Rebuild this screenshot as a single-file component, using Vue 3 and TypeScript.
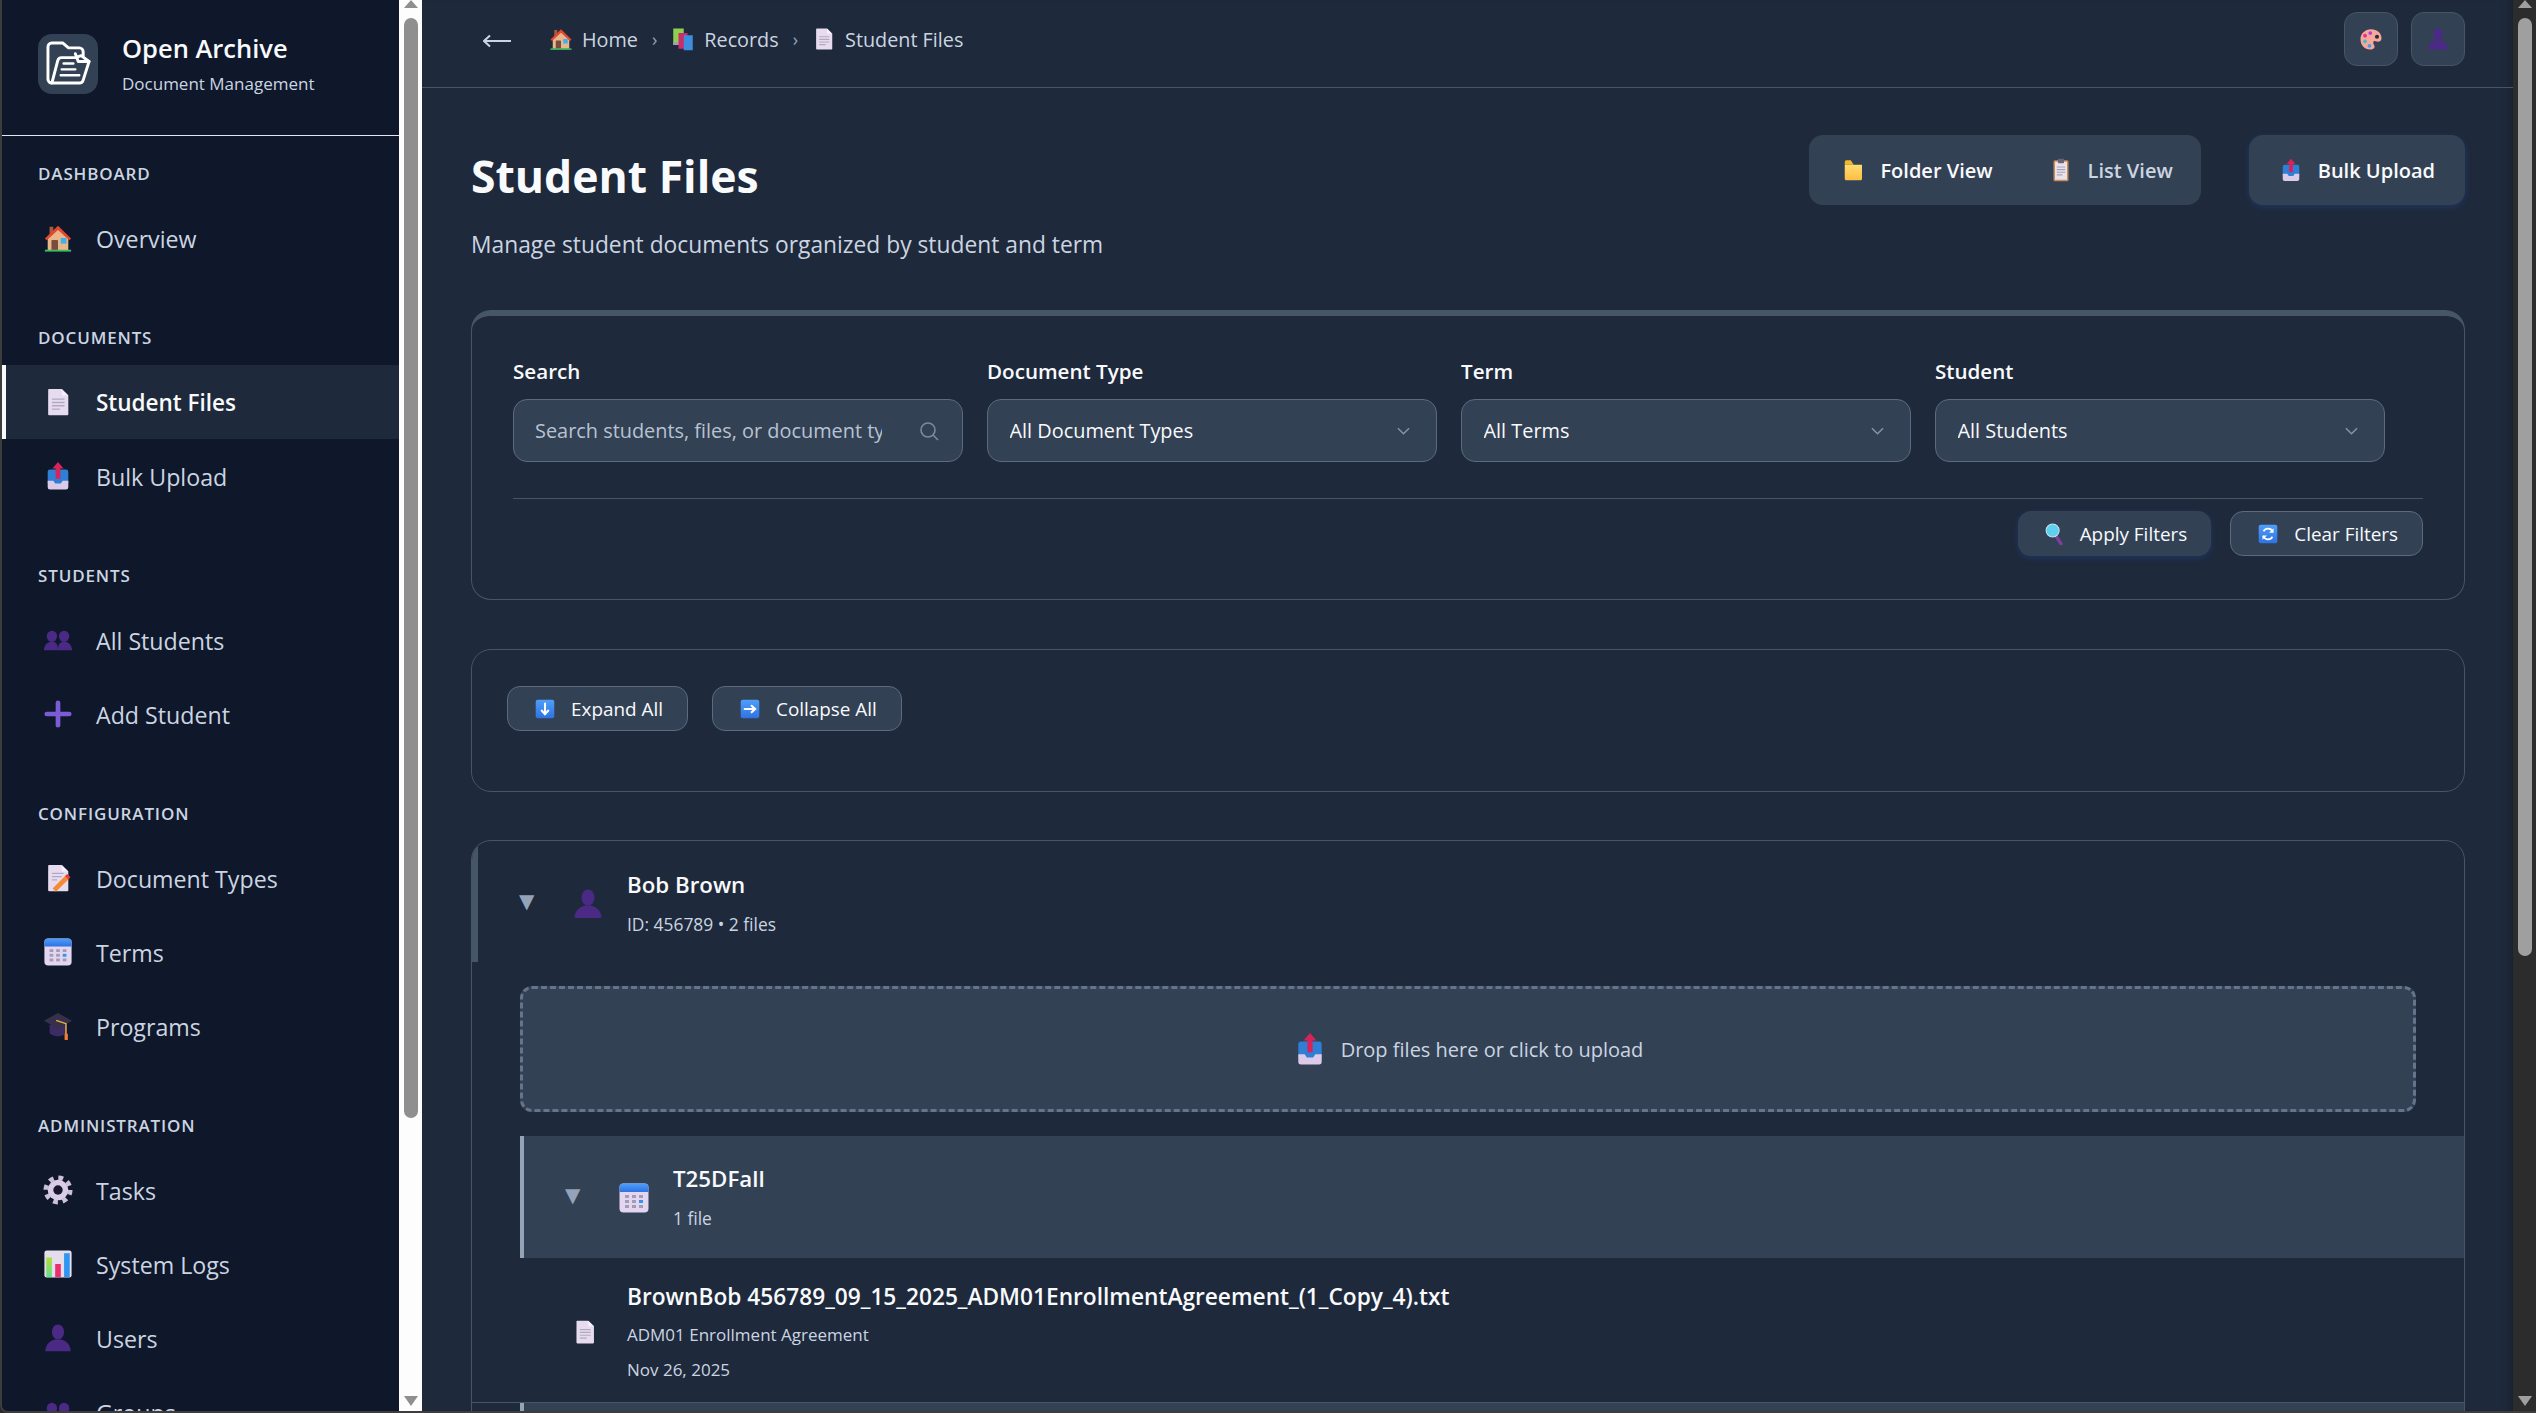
<script setup lang="ts">
interface NavItem {
  label: string;
  icon: string;
  active?: boolean;
}

interface NavSection {
  title: string;
  items: NavItem[];
}

const sections: NavSection[] = [
  { title: 'Dashboard', items: [{ label: 'Overview', icon: 'house' }] },
  {
    title: 'Documents',
    items: [
      { label: 'Student Files', icon: 'doc', active: true },
      { label: 'Bulk Upload', icon: 'upload' },
    ],
  },
  {
    title: 'Students',
    items: [
      { label: 'All Students', icon: 'people' },
      { label: 'Add Student', icon: 'plus' },
    ],
  },
  {
    title: 'Configuration',
    items: [
      { label: 'Document Types', icon: 'docpen' },
      { label: 'Terms', icon: 'calendar' },
      { label: 'Programs', icon: 'cap' },
    ],
  },
  {
    title: 'Administration',
    items: [
      { label: 'Tasks', icon: 'gear' },
      { label: 'System Logs', icon: 'chart' },
      { label: 'Users', icon: 'user' },
      { label: 'Groups', icon: 'people' },
    ],
  },
];

const selects = [
  { label: 'Document Type', value: 'All Document Types' },
  { label: 'Term', value: 'All Terms' },
  { label: 'Student', value: 'All Students' },
];
</script>

<template>
  <div class="app">
    <svg class="sprite" aria-hidden="true">
      <defs>
        <linearGradient id="g-blue" x1="0" y1="0" x2="0" y2="1">
          <stop offset="0" stop-color="#4f9ffa" />
          <stop offset="1" stop-color="#2f72e2" />
        </linearGradient>
        <linearGradient id="g-folder" x1="0" y1="0" x2="0" y2="1">
          <stop offset="0" stop-color="#ffdd6e" />
          <stop offset="1" stop-color="#ffbd45" />
        </linearGradient>
        <linearGradient id="g-green" x1="0" y1="0" x2="0" y2="1">
          <stop offset="0" stop-color="#b5dc3c" />
          <stop offset="1" stop-color="#5fe08f" />
        </linearGradient>
      </defs>
      <symbol id="i-house" viewBox="0 0 32 32">
        <rect x="7" y="4" width="4" height="10" fill="#a65b3c" />
        <path d="M16 6 L27 16 V29 H5 V16z" fill="#e9b78c" />
        <path d="M16 3 L2 16.5 l2 2 L16 7.5 L28 18.5 l2-2z" fill="#e2492f" />
        <rect x="9" y="18" width="7" height="11" rx="1" fill="#7b4b3c" />
        <rect x="19" y="16" width="6" height="6" fill="#3fb0ee" />
        <rect x="2" y="28.5" width="28" height="2" fill="#3dbf5f" />
      </symbol>
      <symbol id="i-doc" viewBox="0 0 32 32">
        <path d="M5.5 3 a1 1 0 0 1 1-1 H20 L27 9 V29 a1 1 0 0 1-1 1 H6.5 a1 1 0 0 1-1-1z" fill="#e7dcef" />
        <path d="M20 2 L27 9 H21 a1 1 0 0 1-1-1z" fill="#f6f0fb" />
        <path d="M9.5 13 H23 M9.5 16.5 H23 M9.5 20 H23 M9.5 23.5 H18" stroke="#b3a8c1" stroke-width="1.4" />
      </symbol>
      <symbol id="i-upload" viewBox="0 0 32 32">
        <rect x="5" y="9" width="22" height="17" rx="2.5" fill="#2f7fd6" />
        <path d="M5 21 H11 l2 3 h6 l2-3 h6 v7 a2.5 2.5 0 0 1-2.5 2.5 H7.5 A2.5 2.5 0 0 1 5 28z" fill="#dccbe8" />
        <path d="M16 1 L22 8 H18.5 V19 H13.5 V8 H10z" fill="#d6245a" />
      </symbol>
      <symbol id="i-people" viewBox="0 0 32 32">
        <ellipse cx="9.5" cy="12" rx="5.5" ry="6" fill="#4a2a85" />
        <path d="M1 27 c0-5 3-8 6-9 h5 c3 1 4 4 4 9z" fill="#4a2a85" />
        <ellipse cx="22.5" cy="12" rx="5.5" ry="6" fill="#4a2a85" />
        <path d="M16 27 c0-5 1-8 4-9 h5 c3 1 6 4 6 9z" fill="#4a2a85" />
      </symbol>
      <symbol id="i-user" viewBox="0 0 32 32">
        <ellipse cx="16" cy="9.5" rx="6.5" ry="8" fill="#4a2a85" />
        <path d="M2.5 30 c0-8 6-11 10-12.5 h7 c4 1.5 10 4.5 10 12.5z" fill="#4a2a85" />
      </symbol>
      <symbol id="i-plus" viewBox="0 0 32 32">
        <rect x="13.5" y="1.5" width="5" height="29" rx="2.5" fill="#7b5cd6" />
        <rect x="1.5" y="13.5" width="29" height="5" rx="2.5" fill="#7b5cd6" />
      </symbol>
      <symbol id="i-docpen" viewBox="0 0 32 32">
        <path d="M5.5 3 a1 1 0 0 1 1-1 H20 L27 9 V29 a1 1 0 0 1-1 1 H6.5 a1 1 0 0 1-1-1z" fill="#e7dcef" />
        <path d="M20 2 L27 9 H21 a1 1 0 0 1-1-1z" fill="#f6f0fb" />
        <path d="M9.5 11 H22 M9.5 14.5 H20 M9.5 18 H15" stroke="#b3a8c1" stroke-width="1.4" />
        <path d="M12 29 L25 16" stroke="#f58a32" stroke-width="5" />
        <path d="M25 16 L27.5 13.5" stroke="#e9432f" stroke-width="5" />
      </symbol>
      <symbol id="i-calendar" viewBox="0 0 32 32">
        <rect x="1.5" y="1.5" width="29" height="29" rx="4" fill="#e2d6f0" />
        <path d="M1.5 10 V5.5 a4 4 0 0 1 4-4 h21 a4 4 0 0 1 4 4 V10z" fill="url(#g-blue)" />
        <g fill="#a59cb3">
          <rect x="7" y="13" width="4" height="3" />
          <rect x="14" y="13" width="4" height="3" />
          <rect x="21" y="13" width="4" height="3" />
          <rect x="7" y="18" width="4" height="3" />
          <rect x="14" y="18" width="4" height="3" />
          <rect x="7" y="23" width="4" height="3" />
          <rect x="14" y="23" width="4" height="3" />
          <rect x="21" y="23" width="4" height="3" />
        </g>
        <rect x="21" y="18" width="4" height="3" fill="#2f95f0" />
      </symbol>
      <symbol id="i-cap" viewBox="0 0 32 32">
        <path d="M7 15 v8 c0 2 5 4 9 4 s9-2 9-4 v-8z" fill="#3d2b63" />
        <path d="M16 2 L31 10.5 L16 19 L1 10.5z" fill="#36304a" />
        <path d="M14 10 L24.5 13.5 V25" fill="none" stroke="#f4b23f" stroke-width="1.5" />
        <rect x="23" y="24" width="3.5" height="7" rx="1" fill="#f07d30" />
      </symbol>
      <symbol id="i-gear" viewBox="0 0 32 32">
        <circle cx="16" cy="16" r="13" fill="none" stroke="#cdbfdc" stroke-width="5" stroke-dasharray="5.1 5.11" />
        <circle cx="16" cy="16" r="11" fill="#d9cce6" />
        <circle cx="16" cy="16" r="5" fill="#1a1530" />
      </symbol>
      <symbol id="i-chart" viewBox="0 0 32 32">
        <rect x="1.5" y="1.5" width="29" height="29" rx="2.5" fill="#e4deec" />
        <rect x="3.5" y="9" width="6" height="21" fill="url(#g-green)" />
        <rect x="13" y="16" width="6" height="14" fill="#ea2f6e" />
        <rect x="22.5" y="4.5" width="6" height="25.5" fill="#2f95f0" />
      </symbol>
      <symbol id="i-books" viewBox="0 0 32 32">
        <rect x="3" y="2" width="14" height="22" fill="#8fd14f" />
        <rect x="3" y="20" width="14" height="4" fill="#a6a0ad" />
        <rect x="10" y="8" width="12" height="21" fill="#c92d6b" />
        <rect x="17" y="11" width="12" height="20" fill="#3f8ede" />
      </symbol>
      <symbol id="i-folder" viewBox="0 0 32 32">
        <path d="M5 5 a2 2 0 0 1 2-2 h6 l4 6 H5z" fill="#f5b72e" />
        <path d="M5 9 H28 V28 a1.5 1.5 0 0 1-1.5 1.5 H6.5 A1.5 1.5 0 0 1 5 28z" fill="url(#g-folder)" />
      </symbol>
      <symbol id="i-clipboard" viewBox="0 0 32 32">
        <rect x="6" y="3" width="20" height="28" rx="2" fill="#cb8c50" />
        <rect x="8" y="5" width="16" height="24" fill="#e8e2ee" />
        <rect x="12" y="1" width="8" height="6" rx="1" fill="#6b6572" />
        <path d="M10.5 12 H21.5 M10.5 15.5 H21.5 M10.5 19 H21.5 M10.5 22.5 H18" stroke="#aaa2b5" stroke-width="1.4" />
      </symbol>
      <symbol id="i-palette" viewBox="0 0 32 32">
        <path d="M16 3 C24 3 30 8 30 15 C30 20 25 20 22 19 C19 18 18 21 20 24 C22 27 20 30 15 30 C7 30 2 24 2 16 C2 9 8 3 16 3z" fill="#f7a79b" />
        <circle cx="15" cy="8" r="2.5" fill="#b23fd8" />
        <circle cx="8" cy="11.5" r="2.5" fill="#e8307e" />
        <circle cx="8" cy="19" r="2.5" fill="#3cc0c8" />
        <circle cx="14" cy="25" r="2.5" fill="#3aa0e8" />
        <circle cx="24" cy="13" r="2.8" fill="#2b2b3a" />
      </symbol>
      <symbol id="i-search" viewBox="0 0 32 32">
        <path d="M19 19 L26 30" stroke="#7d3f98" stroke-width="5" stroke-linecap="round" />
        <circle cx="14" cy="11" r="9.5" fill="#5ed0ee" stroke="#bfe2f2" stroke-width="1.5" />
      </symbol>
      <symbol id="i-down" viewBox="0 0 32 32">
        <rect x="2.5" y="2.5" width="27" height="27" rx="3" fill="url(#g-blue)" />
        <path d="M16 7 V23 M10.5 17.5 L16 23.5 L21.5 17.5" fill="none" stroke="#fff" stroke-width="3" />
      </symbol>
      <symbol id="i-right" viewBox="0 0 32 32">
        <rect x="2.5" y="2.5" width="27" height="27" rx="3" fill="url(#g-blue)" />
        <path d="M7 16 H23 M17.5 10.5 L23.5 16 L17.5 21.5" fill="none" stroke="#fff" stroke-width="3" />
      </symbol>
      <symbol id="i-refresh" viewBox="0 0 32 32">
        <rect x="2.5" y="2.5" width="27" height="27" rx="3" fill="url(#g-blue)" />
        <path d="M23 13 A7.5 7.5 0 0 0 9.5 12 M9 19 A7.5 7.5 0 0 0 22.5 20" fill="none" stroke="#fff" stroke-width="2.5" />
        <path d="M24 7.5 V14 H17.5z M8 24.5 V18 H14.5z" fill="#fff" />
      </symbol>
    </svg>

    <aside class="sidebar">
      <div class="brand">
        <div class="brand-logo">
          <svg viewBox="0 0 46 46" fill="none" stroke="#fff" stroke-width="3" stroke-linejoin="round" stroke-linecap="round">
            <path d="M6 43 a4 4 0 0 1-4-4 V6 a4 4 0 0 1 4-4 h11 l6 5 h11 a4 4 0 0 1 4 4 v4" />
            <path d="M6 43 l6-23 a4 4 0 0 1 4-3 h14 l6-2 l8 6 l-6 19 a4 4 0 0 1-4 3z" />
            <path d="M30 13 l3 8 h11" />
            <path d="M18 23 h10 M16 29 h14 M15 35 h19" stroke-width="2.4" />
          </svg>
        </div>
        <div>
          <div class="brand-name">Open Archive</div>
          <div class="brand-sub">Document Management</div>
        </div>
      </div>

      <nav class="nav">
        <section v-for="section in sections" :key="section.title" class="nav-section">
          <h3 class="nav-title">{{ section.title }}</h3>
          <a
            v-for="item in section.items"
            :key="item.label"
            class="nav-item"
            :class="{ active: item.active }"
          >
            <svg class="nav-icon"><use :href="'#i-' + item.icon" /></svg>
            <span>{{ item.label }}</span>
          </a>
        </section>
      </nav>
    </aside>

    <div class="scrollbar light">
      <span class="arrow up"></span>
      <span class="thumb side-thumb"></span>
      <span class="arrow down"></span>
    </div>

    <main class="main">
      <header class="topbar">
        <button class="back" aria-label="Back">
          <svg viewBox="0 0 28 14" fill="none" stroke="#cbd5e1" stroke-width="2">
            <path d="M1 7 H28 M7 1.5 L1 7 L7 12.5" />
          </svg>
        </button>
        <div class="crumbs">
          <svg class="crumb-icon"><use href="#i-house" /></svg>
          <span>Home</span>
          <span class="sep">›</span>
          <svg class="crumb-icon"><use href="#i-books" /></svg>
          <span>Records</span>
          <span class="sep">›</span>
          <svg class="crumb-icon"><use href="#i-doc" /></svg>
          <span>Student Files</span>
        </div>
        <div class="top-actions">
          <button class="top-btn"><svg class="top-icon"><use href="#i-palette" /></svg></button>
          <button class="top-btn"><svg class="top-icon"><use href="#i-user" /></svg></button>
        </div>
      </header>

      <div class="content">
        <div class="page-head">
          <div class="page-text">
            <h1>Student Files</h1>
            <p>Manage student documents organized by student and term</p>
          </div>
          <div class="page-actions">
            <div class="view-toggle">
              <button class="view-btn on">
                <svg class="btn-icon"><use href="#i-folder" /></svg>Folder View
              </button>
              <button class="view-btn">
                <svg class="btn-icon"><use href="#i-clipboard" /></svg>List View
              </button>
            </div>
            <button class="view-btn upload-btn">
              <svg class="btn-icon"><use href="#i-upload" /></svg>Bulk Upload
            </button>
          </div>
        </div>

        <section class="card filters">
          <div class="filter-grid">
            <div class="field">
              <label>Search</label>
              <div class="control">
                <input type="text" placeholder="Search students, files, or document types..." />
                <svg class="control-icon search" viewBox="0 0 20 20" fill="none" stroke="#7c8a9e" stroke-width="1.6">
                  <circle cx="9" cy="9" r="7" />
                  <path d="M14 14 L19 19" />
                </svg>
              </div>
            </div>
            <div v-for="sel in selects" :key="sel.label" class="field">
              <label>{{ sel.label }}</label>
              <div class="control">
                <select>
                  <option>{{ sel.value }}</option>
                </select>
                <svg class="control-icon chevron" viewBox="0 0 14 8" fill="none" stroke="#8794a8" stroke-width="1.6">
                  <path d="M1 1 L7 7 L13 1" />
                </svg>
              </div>
            </div>
          </div>
          <div class="filter-actions">
            <button class="small-btn glow"><svg class="small-icon"><use href="#i-search" /></svg>Apply Filters</button>
            <button class="small-btn"><svg class="small-icon"><use href="#i-refresh" /></svg>Clear Filters</button>
          </div>
        </section>

        <section class="card expand-bar">
          <button class="small-btn"><svg class="small-icon"><use href="#i-down" /></svg>Expand All</button>
          <button class="small-btn"><svg class="small-icon"><use href="#i-right" /></svg>Collapse All</button>
        </section>

        <section class="card student">
          <div class="student-head">
            <span class="caret">▼</span>
            <svg class="row-icon"><use href="#i-user" /></svg>
            <div>
              <div class="row-name">Bob Brown</div>
              <div class="row-sub">ID: 456789 • 2 files</div>
            </div>
          </div>

          <div class="dropzone">
            <svg class="drop-icon"><use href="#i-upload" /></svg>
            <span>Drop files here or click to upload</span>
          </div>

          <div class="term">
            <span class="caret">▼</span>
            <svg class="row-icon"><use href="#i-calendar" /></svg>
            <div>
              <div class="row-name">T25DFall</div>
              <div class="row-sub">1 file</div>
            </div>
          </div>

          <div class="file">
            <svg class="file-icon"><use href="#i-doc" /></svg>
            <div>
              <div class="file-name">BrownBob 456789_09_15_2025_ADM01EnrollmentAgreement_(1_Copy_4).txt</div>
              <div class="file-meta">ADM01 Enrollment Agreement</div>
              <div class="file-meta">Nov 26, 2025</div>
            </div>
          </div>

          <div class="term"></div>
        </section>
      </div>
    </main>

    <div class="scrollbar dark">
      <span class="arrow up"></span>
      <span class="thumb main-thumb"></span>
      <span class="arrow down"></span>
    </div>
  </div>
</template>

<style>
html,
body {
  margin: 0;
  background: #2b2b2b;
  overflow: hidden;
}
</style>

<style scoped>
.app {
  display: flex;
  width: 2536px;
  height: 1413px;
  box-sizing: border-box;
  overflow: hidden;
  border-left: 2px solid #3d3d3d;
  border-bottom: 2px solid #3d3d3d;
  border-bottom-left-radius: 8px;
  background: #1e293b;
  color: #f8fafc;
  font-family: 'Open Sans', 'Noto Sans', sans-serif;
}

.sprite {
  position: absolute;
  width: 0;
  height: 0;
}

button,
input,
select {
  font-family: inherit;
}

/* sidebar */
.sidebar {
  flex: 0 0 397px;
  overflow: hidden;
  background: #0f172a;
}

.brand {
  display: flex;
  align-items: center;
  gap: 24px;
  height: 135px;
  padding: 0 36px;
  border-bottom: 1.5px solid #e2e8f0;
}

.brand-logo {
  display: flex;
  align-items: center;
  justify-content: center;
  width: 60px;
  height: 60px;
  margin-top: -8px;
  border-radius: 14px;
  background: #334155;
}

.brand-logo svg {
  width: 45px;
  height: 45px;
}

.brand-name {
  margin-top: -10px;
  font-size: 25.5px;
  font-weight: 600;
  line-height: 36px;
}

.brand-sub {
  margin-top: 6px;
  font-size: 17px;
  line-height: 24px;
  color: #cbd5e1;
}

.nav {
  padding-top: 26px;
}

.nav-section {
  margin-bottom: 51px;
}

.nav-title {
  margin: 0 0 15px;
  padding-left: 36px;
  font-size: 17px;
  font-weight: 600;
  line-height: 24px;
  letter-spacing: 0.85px;
  text-transform: uppercase;
  color: #cbd5e1;
}

.nav-item {
  display: flex;
  align-items: center;
  gap: 23px;
  height: 74px;
  padding-left: 41px;
  font-size: 23.2px;
  font-weight: 500;
  color: #cbd5e1;
}

.nav-item span {
  margin-top: 1px;
}

.nav-item.active {
  padding-left: 37px;
  border-left: 4px solid #f8fafc;
  background: #1e293b;
  font-size: 22.5px;
  font-weight: 600;
  color: #f8fafc;
}

.nav-icon {
  flex: none;
  width: 30px;
  height: 30px;
}

/* fake scrollbars, the window's own are not drawn in the photo */
.scrollbar {
  display: flex;
  flex: 0 0 23px;
  flex-direction: column;
  align-items: center;
  box-sizing: border-box;
}

.scrollbar.light {
  background: #fdfdfd;
  --bar: #8f8f8f;
}

.scrollbar.dark {
  background: #2c2c2c;
  --bar: #9f9f9f;
}

.thumb {
  width: 14px;
  margin-top: 10px;
  border-radius: 7px;
  background: var(--bar);
}

.side-thumb {
  height: 1100px;
}

.main-thumb {
  height: 938px;
}

.arrow {
  width: 0;
  height: 0;
  border-left: 7.5px solid transparent;
  border-right: 7.5px solid transparent;
}

.arrow.up {
  border-bottom: 8px solid var(--bar);
}

.arrow.down {
  margin-top: auto;
  margin-bottom: 5px;
  border-top: 10px solid var(--bar);
}

/* main */
.main {
  flex: 1;
  min-width: 0;
  overflow: hidden;
  box-shadow: inset -10px 0 10px -8px rgba(0, 0, 0, 0.25);
}

.topbar {
  display: flex;
  align-items: center;
  height: 87.5px;
  box-sizing: border-box;
  padding: 0 48px 8px 61px;
  border-bottom: 1.5px solid #475569;
}

.back {
  display: flex;
  width: 28px;
  height: 14px;
  margin: 4px 38px 0 0;
  padding: 0;
  border: 0;
  background: none;
}

.back svg {
  width: 28px;
  height: 14px;
}

.crumbs {
  display: flex;
  align-items: center;
  font-size: 19.8px;
  color: #cbd5e1;
}

.crumb-icon {
  width: 24px;
  height: 24px;
  margin-right: 9px;
}

.sep {
  margin: 0 14px;
  color: #94a3b8;
  font-size: 18px;
}

.top-actions {
  display: flex;
  gap: 13px;
  margin-left: auto;
}

.top-btn {
  display: flex;
  align-items: center;
  justify-content: center;
  width: 54px;
  height: 54px;
  padding: 0;
  border: 1px solid #475569;
  border-radius: 13px;
  background: #334155;
}

.top-icon {
  width: 24px;
  height: 24px;
}

.content {
  padding: 47.5px 48px 0 49px;
}

.page-head {
  display: flex;
  justify-content: space-between;
  margin-bottom: 48px;
}

.page-text h1 {
  margin: 12px 0 0;
  font-size: 44.5px;
  font-weight: 700;
  line-height: 58px;
}

.page-text p {
  margin: 23px 0 0;
  font-size: 22.8px;
  line-height: 34px;
  color: #cbd5e1;
}

.page-actions {
  display: flex;
  align-items: flex-start;
  gap: 48px;
}

.view-toggle {
  display: flex;
  padding: 0 0 0 4px;
  border-radius: 14px;
  background: #334155;
}

.view-btn {
  display: flex;
  align-items: center;
  gap: 15px;
  height: 70px;
  padding: 0 28px;
  border: 0;
  border-radius: 14px;
  background: transparent;
  font-size: 20px;
  font-weight: 600;
  color: #cbd5e1;
}

.view-btn.on {
  color: #f8fafc;
}

.upload-btn {
  padding: 0 30px;
  background: #334155;
  color: #f8fafc;
  box-shadow: 0 2px 6px rgba(37, 99, 235, 0.22);
}

.btn-icon {
  flex: none;
  width: 24px;
  height: 24px;
}

.card {
  border: 1px solid #475569;
  border-radius: 20px;
  background: #1e293b;
}

.filters {
  height: 290px;
  box-sizing: border-box;
  padding: 40px 41px 0;
  border-top: 6px solid #475569;
  margin-bottom: 49px;
}

.filter-grid {
  display: grid;
  grid-template-columns: repeat(4, 450px);
  gap: 24px;
  padding-bottom: 36px;
  border-bottom: 1.5px solid #475569;
}

.field label {
  display: block;
  margin-bottom: 13px;
  font-size: 20.6px;
  font-weight: 600;
  line-height: 30px;
}

.control {
  position: relative;
}

.control input,
.control select {
  display: block;
  width: 100%;
  height: 63px;
  box-sizing: border-box;
  border: 1.5px solid #5b6a80;
  border-radius: 14px;
  background: #334155;
  font-size: 19.9px;
  color: #f8fafc;
  outline: none;
  appearance: none;
}

.control input {
  padding: 0 80px 0 21px;
}

.control input::placeholder {
  color: #b8c3d2;
  opacity: 1;
}

.control select {
  padding: 0 50px 0 21.5px;
  font-weight: 500;
}

.control-icon {
  position: absolute;
  top: 50%;
  pointer-events: none;
}

.control-icon.search {
  right: 24px;
  width: 20px;
  height: 20px;
  margin-top: -10px;
}

.control-icon.chevron {
  right: 27px;
  width: 13px;
  height: 8px;
  margin-top: -4px;
}

.filter-actions {
  display: flex;
  justify-content: flex-end;
  gap: 19px;
  padding-top: 12px;
}

.small-btn {
  display: flex;
  align-items: center;
  gap: 15px;
  height: 45px;
  padding: 0 24px 0 26px;
  border: 1.5px solid #5b6a80;
  border-radius: 13px;
  background: #334155;
  font-size: 18.9px;
  font-weight: 500;
  color: #f8fafc;
}

.small-btn.glow {
  padding: 0 23px 0 24px;
  border-color: transparent;
  box-shadow: 0 2px 6px rgba(37, 99, 235, 0.22);
}

.small-icon {
  flex: none;
  width: 22px;
  height: 22px;
}

.expand-bar {
  display: flex;
  align-items: flex-start;
  gap: 24px;
  height: 143px;
  box-sizing: border-box;
  padding: 36px 35px 0;
  margin-bottom: 48px;
}

.student {
  height: 620px;
  overflow: hidden;
}

.student-head {
  display: flex;
  align-items: center;
  height: 121px;
  box-sizing: border-box;
  padding: 2px 0 0 41px;
  border-left: 6px solid #475569;
}

.caret {
  flex: none;
  width: 16px;
  margin-top: -4px;
  font-family: 'DejaVu Sans', sans-serif;
  font-size: 20px;
  line-height: 1;
  color: #94a3b8;
}

.row-icon {
  flex: none;
  width: 32px;
  height: 32px;
  margin: 2px 23px 0 37px;
}

.row-name {
  font-size: 22.3px;
  font-weight: 600;
  line-height: 30px;
}

.row-sub {
  margin-top: 12px;
  font-size: 17.4px;
  font-weight: 500;
  line-height: 24px;
  color: #cbd5e1;
}

.dropzone {
  display: flex;
  align-items: center;
  justify-content: center;
  gap: 14px;
  height: 126px;
  box-sizing: border-box;
  margin: 24px 48px;
  border: 3px dashed #64748b;
  border-radius: 12px;
  background: #334155;
  font-size: 20px;
  color: #cbd5e1;
}

.drop-icon {
  width: 34px;
  height: 34px;
}

.term {
  display: flex;
  align-items: center;
  height: 122px;
  box-sizing: border-box;
  margin-left: 48px;
  padding-left: 41px;
  border-left: 4px solid #94a3b8;
  background: #334155;
}

.file {
  display: flex;
  align-items: center;
  height: 145px;
  box-sizing: border-box;
  padding: 4px 0 0 100px;
  border-bottom: 1.5px solid #475569;
}

.file-icon {
  flex: none;
  width: 26px;
  height: 26px;
  margin-right: 29px;
}

.file-name {
  font-size: 22.7px;
  font-weight: 600;
  line-height: 30px;
}

.file-meta {
  margin-top: 11px;
  font-size: 17px;
  line-height: 24px;
  color: #cbd5e1;
}
</style>
